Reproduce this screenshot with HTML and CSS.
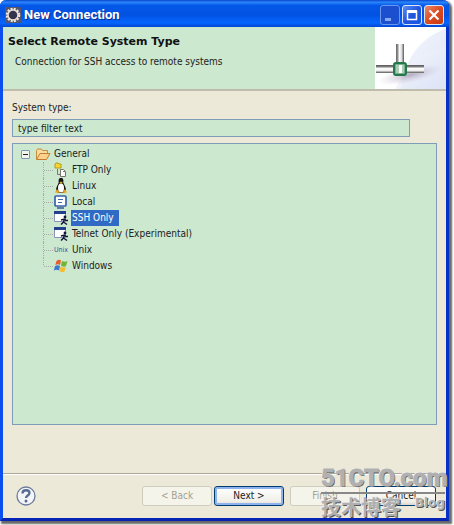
FILE: index.html
```
<!DOCTYPE html>
<html lang="en">
<head>
    <meta charset="UTF-8">
    <meta name="viewport" content="width=device-width, initial-scale=1.0">
    <title>New Connection</title>
    <link rel="stylesheet" href="styles.css">
</head>
<body>
    <div class="window">
        <div class="titlebar">
            <svg class="app-icon" viewBox="0 0 16 16" width="16" height="16">
                <rect width="16" height="16" rx="1" fill="#55556c"/>
                <circle cx="8" cy="8" r="6" fill="none" stroke="#eee8de" stroke-width="2.500" stroke-dasharray="2 1.14"/>
                <circle cx="8" cy="8" r="5" fill="#34344c" stroke="#e6e0d8" stroke-width="1.500"/>
            </svg>
            <span class="title">New Connection</span>
            <div class="controls">
                <button type="button" class="control minimize" aria-label="Minimize">
                    <svg viewBox="0 0 18 18" width="18" height="18"><path d="M4 12h6v3H4z" fill="#86aaf2"/></svg>
                </button>
                <button type="button" class="control" aria-label="Maximize">
                    <svg viewBox="0 0 18 18" width="18" height="18"><path d="M4.500 5.500h9v8h-9z" fill="none" stroke="#fff" stroke-width="1.500"/><path d="M4 4h10v3H4z" fill="#fff"/></svg>
                </button>
                <button type="button" class="control close" aria-label="Close">
                    <svg viewBox="0 0 18 18" width="18" height="18"><path d="M4.500 4.500l9 9M13.500 4.500l-9 9" stroke="#fff" stroke-width="2.200"/></svg>
                </button>
            </div>
        </div>

        <header class="banner">
            <div class="banner-text">
                <h1>Select Remote System Type</h1>
                <p>Connection for SSH access to remote systems</p>
            </div>
            <svg class="banner-art" viewBox="0 0 71 62" width="71" height="62">
                <defs>
                    <linearGradient id="sky" x1="0" y1="0" x2="1" y2="1">
                        <stop offset="0" stop-color="#f7f9fe"/>
                        <stop offset="1" stop-color="#dbe2f5"/>
                    </linearGradient>
                    <linearGradient id="pipe-h" x1="0" y1="0" x2="0" y2="1">
                        <stop offset="0" stop-color="#555"/>
                        <stop offset="0.250" stop-color="#888"/>
                        <stop offset="0.400" stop-color="#fff"/>
                        <stop offset="0.700" stop-color="#eee"/>
                        <stop offset="1" stop-color="#555"/>
                    </linearGradient>
                    <linearGradient id="pipe-v" x1="0" y1="0" x2="1" y2="0">
                        <stop offset="0" stop-color="#666"/>
                        <stop offset="0.250" stop-color="#999"/>
                        <stop offset="0.400" stop-color="#fff"/>
                        <stop offset="0.700" stop-color="#ddd"/>
                        <stop offset="1" stop-color="#555"/>
                    </linearGradient>
                    <radialGradient id="shade">
                        <stop offset="0" stop-color="#9d91aa" stop-opacity="0.700"/>
                        <stop offset="1" stop-color="#c8c0d4" stop-opacity="0"/>
                    </radialGradient>
                </defs>
                <rect width="71" height="62" fill="#fff"/>
                <path d="M26 62C28 36 44 10 71 2v60z" fill="url(#sky)"/>
                <path d="M34 39Q48 22 71 20v42H20z" fill="url(#sky)" opacity="0.700"/>
                <ellipse cx="35" cy="48" rx="33" ry="8" fill="url(#shade)" transform="rotate(-12 35 48)"/>
                <rect x="1" y="38" width="48" height="8" fill="url(#pipe-h)"/>
                <rect x="21" y="17" width="8" height="21" fill="url(#pipe-v)"/>
                <rect x="19" y="36" width="12" height="12" rx="2" fill="#76b08e" stroke="#23784b" stroke-width="2"/>
                <rect x="21" y="38" width="8" height="8" fill="#a9cbb5"/>
                <rect x="24" y="38" width="3" height="8" fill="#fff"/>
            </svg>
        </header>

        <main class="content">
            <label for="filter">System type:</label>
            <input type="text" id="filter" class="filter" value="type filter text">

            <div class="tree">
                <div class="node root">
                    <button type="button" class="toggle" aria-label="Collapse General"></button>
                    <svg viewBox="0 0 16 16" width="16" height="16">
                        <path d="M1.500 13V4.500l1-1.500h4l1 1.500h5V7" fill="#f8dca0" stroke="#c98b3c"/>
                        <path d="M1.500 13.500L5 7.500h10l-3.500 6z" fill="#fbd28c" stroke="#c67c2e"/>
                    </svg>
                    <span class="label">General</span>
                </div>
                <ul class="children">
                    <li class="node">
                        <svg viewBox="0 0 16 16" width="16" height="16">
                            <path d="M2 2l1-1h2l1 1h2v4H2z" fill="#f5d72e" stroke="#b49a20"/>
                            <path d="M4.500 7v5.500H7" fill="none" stroke="#777"/>
                            <path d="M7.500 7.500h3l2 2v5h-5zM10 9.500h2" fill="#fff" stroke="#77756a"/>
                        </svg>
                        <span class="label">FTP Only</span>
                    </li>
                    <li class="node">
                        <svg viewBox="0 0 16 16" width="16" height="16">
                            <path d="M8 0C5.500 0 5.500 2 5.700 4.500C5 7 3 9 3 12l2 3h6l2-3c0-3-2-5-2.700-7.500C10.500 2 10.500 0 8 0z" fill="#151515"/>
                            <ellipse cx="8" cy="10" rx="3" ry="4.500" fill="#fff"/>
                            <path d="M6.500 4.500L8 3.500l1.700 1L8 6z" fill="#f4ac20"/>
                            <path d="M2 14.500l2-3.500 3 4zM14 14.500L12 11l-3 4z" fill="#f0a020"/>
                        </svg>
                        <span class="label">Linux</span>
                    </li>
                    <li class="node">
                        <svg viewBox="0 0 16 16" width="16" height="16">
                            <rect x="2" y="2" width="11" height="10" rx="1" fill="#fff" stroke="#3a62a8" stroke-width="1.700"/>
                            <path d="M5 5.500h5M5 8.500h4" stroke="#4167ad"/>
                            <path d="M4 14h7" stroke="#34599b" stroke-width="1.500"/>
                        </svg>
                        <span class="label">Local</span>
                    </li>
                    <li class="node">
                        <svg viewBox="0 0 16 16" width="16" height="16">
                            <path d="M1.500 1.500h11v10h-11z" fill="#fff" stroke="#8992b6"/>
                            <path d="M1 1h12v3H1z" fill="#233f8e"/>
                            <circle cx="12" cy="7" r="1.400" fill="#111936"/>
                            <path d="M8 10l3.500-1 1.500 1.500h2M11.500 9l-1 3L8 14.500M10.500 12l3.500 2.500" fill="none" stroke="#111936" stroke-width="1.400"/>
                        </svg>
                        <span class="label selected">SSH Only</span>
                    </li>
                    <li class="node">
                        <svg viewBox="0 0 16 16" width="16" height="16">
                            <path d="M1.500 1.500h11v10h-11z" fill="#fff" stroke="#8992b6"/>
                            <path d="M1 1h12v3H1z" fill="#233f8e"/>
                            <circle cx="12" cy="7" r="1.400" fill="#111936"/>
                            <path d="M8 10l3.500-1 1.500 1.500h2M11.500 9l-1 3L8 14.500M10.500 12l3.500 2.500" fill="none" stroke="#111936" stroke-width="1.400"/>
                        </svg>
                        <span class="label">Telnet Only (Experimental)</span>
                    </li>
                    <li class="node">
                        <span class="unix-icon">Unix</span>
                        <span class="label">Unix</span>
                    </li>
                    <li class="node">
                        <svg viewBox="0 0 16 16" width="16" height="16">
                            <path d="M3.500 3Q6 1 8 2.500L7 7Q5 5.500 2.300 7z" fill="#e85b2c"/>
                            <path d="M9 3q3 1.500 5.500 0L13 8q-2.500 1.500-5-.5z" fill="#70b43c"/>
                            <path d="M2 8q2.500-1.500 5 0l-1 4.500Q3.500 11 .8 12.500z" fill="#3b78d0"/>
                            <path d="M7.800 8.500q2.500 1.500 5 .5l-1.300 4.500q-2.500 1.500-5-.5z" fill="#f3bd2d"/>
                        </svg>
                        <span class="label">Windows</span>
                    </li>
                </ul>
            </div>
        </main>

        <footer class="actions">
            <button type="button" class="help" aria-label="Help">
                <svg viewBox="0 0 20 20" width="20" height="20">
                    <circle cx="10" cy="10" r="9" fill="#f3f5f8" stroke="#6c7c9c" stroke-width="1.300"/>
                    <path d="M6.500 7.500C6.500 3 13.500 3.500 13.500 7c0 2.500-3.500 2.500-3.500 5" fill="none" stroke="#576b92" stroke-width="2.300"/>
                    <circle cx="10" cy="15" r="1.500" fill="#576b92"/>
                </svg>
            </button>
            <div class="wizard-nav">
                <button type="button" class="btn" disabled>&lt; Back</button>
                <button type="button" class="btn default">Next &gt;</button>
            </div>
            <button type="button" class="btn" disabled>Finish</button>
            <button type="button" class="btn cancel">Cancel</button>
        </footer>
    </div>

    <div class="watermark">
        <div class="site">51CTO.com</div>
        <div class="tagline"><span lang="zh">技术博客</span><span class="blog">Blog</span></div>
    </div>
</body>
</html>
```
FILE: styles.css
```
* {
    box-sizing: border-box;
}
body {
    margin: 0;
    min-height: 100vh;
    display: flex;
    position: relative;
    padding: 0 5px 4px 0;
    background: #fff;
    font-family: "DejaVu Sans Condensed", "Noto Sans", sans-serif;
    font-size: 10px;
    line-height: 16px;
    color: #222;
}
button, input {
    font: inherit;
    color: inherit;
}
svg {
    display: block;
    flex: none;
}
.window {
    flex: 1;
    display: flex;
    flex-direction: column;
    background: #ece9d8;
    border: 3px solid #0a3fe0;
    border-left-color: #0c4ff0;
    border-right-color: #0831c8;
    border-bottom-color: #0524b4;
    border-top: 0;
    border-radius: 6px 6px 0 0;
    box-shadow: 2px 2px 2px 1px #666;
}
.titlebar {
    display: flex;
    align-items: center;
    height: 27px;
    margin: 0 -3px;
    padding: 2px 5px 0 5px;
    border-radius: 6px 6px 0 0;
    background: linear-gradient(#0844cc, #2b86fb 8%, #0458e8 20%, #0252e2 55%, #0566ff 85%, #0246d0);
}
.title {
    flex: 1;
    margin-left: 3px;
    color: #fff;
    font-family: Roboto, sans-serif;
    font-size: 13px;
    font-weight: bold;
    text-shadow: 1px 1px #0a2f90;
}
.controls {
    display: flex;
    gap: 2px;
}
.control {
    width: 20px;
    height: 20px;
    padding: 0;
    border: 1px solid #dce6fd;
    border-radius: 3px;
    background: linear-gradient(135deg, #5c8ff5, #2355dc 50%, #1955e6);
}
.minimize {
    border-color: #6a97ee;
    background: #1c4fd0;
}
.close {
    background: linear-gradient(135deg, #ec8a6a, #dc4a20 50%, #c83a14);
}
.banner {
    display: flex;
    justify-content: space-between;
    height: 64px;
    background: #cce8cf;
    border-bottom: 2px solid #bfbcae;
}
.banner-text {
    padding: 7px 0 0 5px;
}
h1 {
    margin: 0;
    font-family: "DejaVu Sans", sans-serif;
    font-size: 11px;
    line-height: 16px;
    color: #111;
}
p {
    margin: 4px 0 0 7px;
}
.content {
    flex: 1;
    display: flex;
    flex-direction: column;
    padding: 9px 9px 48px 9px;
}
.filter {
    height: 18px;
    margin: 3px 27px 6px 0;
    padding: 0 5px;
    background: #cce8cf;
    border: 1px solid #7f9db9;
}
.tree {
    flex: 1;
    padding: 2px 7px;
    background: #cce8cf;
    border: 1px solid #7f9db9;
}
.node {
    display: flex;
    align-items: center;
    height: 16px;
}
.toggle {
    width: 9px;
    height: 9px;
    margin: 0 5px 0 1px;
    padding: 0;
    border: 1px solid #7b98b8;
    border-radius: 1px;
    background: linear-gradient(#222, #222) center / 5px 1px no-repeat #f4f4ee;
}
.label {
    padding: 0 5px 0 1px;
    margin-left: 2px;
    white-space: nowrap;
}
.children {
    list-style: none;
    margin: 0 0 0 23px;
    padding: 0;
}
.children .node {
    border-left: 1px dotted #aaa;
}
.children .node::before {
    content: "";
    width: 9px;
    border-top: 1px dotted #aaa;
}
.children .node:last-child {
    border-left-color: transparent;
    background: repeating-linear-gradient(#aaa 0 1px, transparent 1px 2px) left top / 1px 8px no-repeat border-box;
}
.selected {
    background: #316ac5;
    color: #fff;
}
.unix-icon {
    width: 16px;
    font-size: 7px;
    color: #2d519c;
    text-align: center;
}
.actions {
    display: flex;
    align-items: center;
    gap: 6px;
    height: 45px;
    padding: 0 10px 0 13px;
    border-top: 1px solid #aca899;
    box-shadow: inset 0 1px #fff;
}
.help {
    padding: 0;
    margin-right: auto;
    border: 0;
    background: none;
}
.wizard-nav {
    display: flex;
    gap: 2px;
}
.btn {
    width: 70px;
    height: 20px;
    padding: 0;
    line-height: 16px;
    border: 1px solid #003c74;
    border-radius: 3px;
    background: linear-gradient(#fff, #f0efe8 80%, #dcd8cc);
}
.btn:disabled {
    color: #a1a192;
    border-color: #cfcdbf;
    background: #f5f4ea;
}
.default {
    box-shadow: inset 0 0 0 2px #8fb3ec;
}
/* stamp over the lower right corner */
.watermark {
    position: absolute;
    right: 9px;
    bottom: 5px;
    width: 124px;
    color: #b0b0b0;
    font-weight: bold;
    text-shadow: -1px -1px #eee, 1px 1px #555;
    pointer-events: none;
}
.site {
    font-family: Roboto, sans-serif;
    font-size: 24px;
    font-weight: bold;
    line-height: 28px;
    -webkit-text-stroke: 1px #b0b0b0;
    border-bottom: 2px solid #888;
}
.tagline {
    display: flex;
    justify-content: space-between;
    font-family: "Noto Sans CJK SC", sans-serif;
    font-size: 20px;
    line-height: 26px;
}
.blog {
    font-family: "DejaVu Sans", sans-serif;
    font-size: 12px;
    line-height: 18px;
}
```
